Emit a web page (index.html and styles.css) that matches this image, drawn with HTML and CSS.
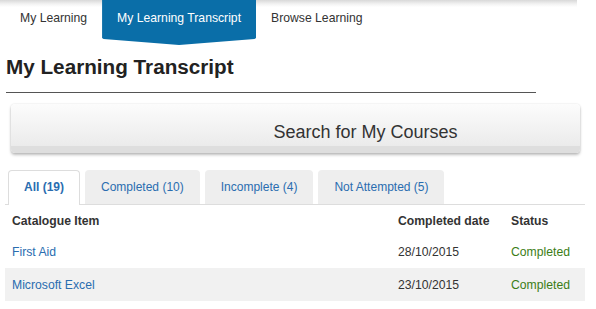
FILE: index.html
```html
<!DOCTYPE html>
<html lang="en">
<head>
    <meta charset="UTF-8">
    <title>My Learning Transcript</title>
    <link rel="stylesheet" href="styles.css">
</head>
<body>
    <div class="topnav">
        <a class="nav-item">My Learning</a>
        <a class="nav-item active">My Learning Transcript</a>
        <a class="nav-item">Browse Learning</a>
    </div>

    <div class="page">
        <h1>My Learning Transcript</h1>

        <button class="search-button">Search for My Courses</button>

        <ul class="tabs">
            <li class="tab active">All (19)</li>
            <li class="tab">Completed (10)</li>
            <li class="tab">Incomplete (4)</li>
            <li class="tab">Not Attempted (5)</li>
        </ul>

        <table class="transcript">
            <thead>
                <tr>
                    <th class="col-item">Catalogue Item</th>
                    <th class="col-date">Completed date</th>
                    <th class="col-status">Status</th>
                </tr>
            </thead>
            <tbody>
                <tr>
                    <td><a class="item-link">First Aid</a></td>
                    <td>28/10/2015</td>
                    <td class="status">Completed</td>
                </tr>
                <tr class="alt">
                    <td><a class="item-link">Microsoft Excel</a></td>
                    <td>23/10/2015</td>
                    <td class="status">Completed</td>
                </tr>
            </tbody>
        </table>
    </div>
</body>
</html>
```

FILE: styles.css
```css
body {
    font-family: "Liberation Sans", Arial, sans-serif;
    margin: 0;
    padding: 0;
    background: #fff;
    color: #333;
}
.topnav {
    display: flex;
    width: 577px;
    height: 45px;
    padding-left: 5px;
    box-sizing: border-box;
    background: linear-gradient(#d8d8d8, #f2f2f2 4px, #fff 7px);
}
.nav-item {
    display: block;
    padding: 0 15px;
    height: 39px;
    line-height: 36px;
    font-size: 12.2px;
    color: #333;
}
.nav-item.active {
    height: 45px;
    background: #0a6ea8;
    color: #fff;
    clip-path: polygon(0 0, 100% 0, 100% 38px, 99% 39px, 50% 45px, 1% 39px, 0 38px);
}
.page {
    padding: 0 5px;
}
h1 {
    width: 530px;
    margin: 10px 0 0 1px;
    padding-bottom: 13px;
    font-size: 20.7px;
    line-height: 24px;
    color: #222;
    border-bottom: 1px solid #555;
}
.search-button {
    display: block;
    width: 569px;
    height: 49px;
    margin: 11px 0 0 6px;
    padding: 7px 0 0 140px;
    font-family: "Liberation Sans", Arial, sans-serif;
    font-size: 18px;
    color: #333;
    border: none;
    border-radius: 4px;
    background: linear-gradient(#fcfcfc, #ebebeb 85%, #dedede 86%, #dedede);
    box-shadow: 0 2px 3px rgba(0, 0, 0, 0.25), 0 0 2px rgba(0, 0, 0, 0.12);
    cursor: pointer;
}
.tabs {
    display: flex;
    gap: 5px;
    margin: 17px 0 0;
    padding: 0 0 0 3px;
    list-style: none;
    border-bottom: 1px solid #ddd;
    width: 577px;
}
.tab {
    height: 33px;
    line-height: 32px;
    padding: 0 15px;
    font-size: 12px;
    color: #2a6db0;
    background: #eee;
    border: 1px solid #eee;
    border-bottom: none;
    border-radius: 4px 4px 0 0;
}
.tab.active {
    background: #fff;
    border-color: #ddd;
    font-weight: bold;
    margin-bottom: -1px;
    height: 34px;
}
.transcript {
    width: 580px;
    border-collapse: collapse;
    font-size: 12.2px;
}
.transcript th, .transcript td {
    height: 33px;
    padding: 0 7px;
    text-align: left;
}
.transcript th {
    height: 28px;
    padding-top: 2px;
    color: #333;
}
.col-item {
    width: 372px;
}
.col-date {
    width: 99px;
}
.transcript tr.alt td {
    background: #f1f1f1;
}
.item-link {
    color: #2a6db0;
}
.status {
    color: #3b7d16;
}
```
